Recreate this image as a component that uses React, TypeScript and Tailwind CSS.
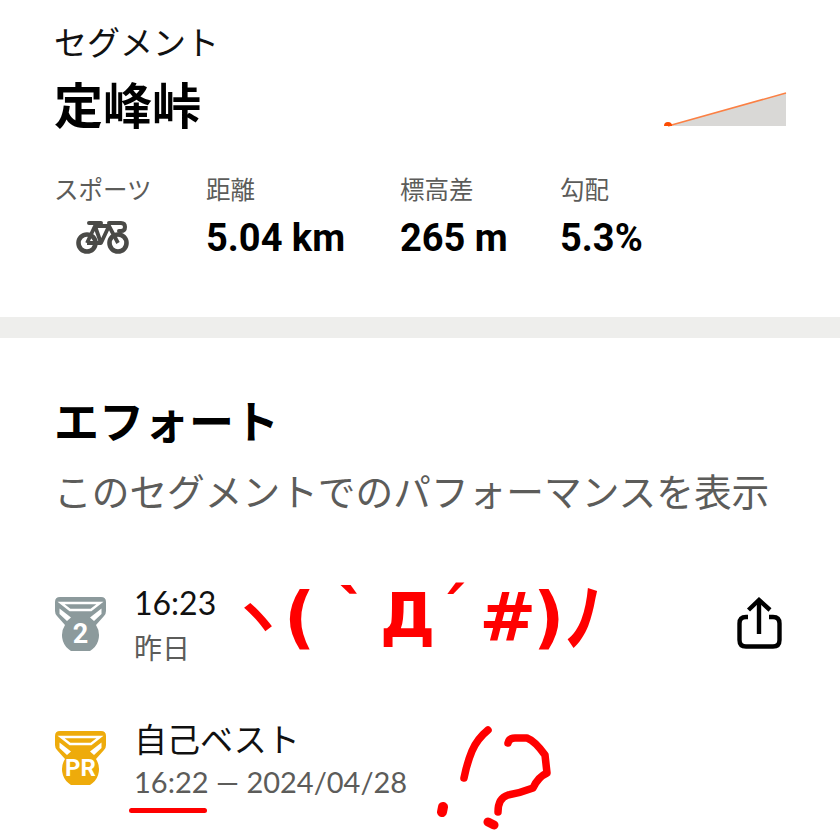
import React from 'react';

const JP = "font-['Noto_Sans_CJK_JP','Noto_Sans',sans-serif]";

function Stat({ label, value, className }: { label: string; value: string; className: string }) {
  return (
    <div className={className}>
      <div className="text-[24.5px] leading-[28px] text-[#5c5c5a]">{label}</div>
      <div className="mt-[13px] text-[38px] leading-[44px] font-bold text-black font-['Roboto',sans-serif]">{value}</div>
    </div>
  );
}

function Medal({ color, children }: { color: string; children: React.ReactNode }) {
  return (
    <svg width="51" height="54" viewBox="0 0 51 54" className="shrink-0 ml-[1px] mt-[-2px]">
      <path
        d="M5 0H46Q51 0 51 5V14Q51 17 49 19L41 28A18.5 18.5 0 1 1 10 28L2 19Q0 17 0 14V5Q0 0 5 0Z"
        fill={color}
      />
      <path d="M6 6H45L36 13H15Z" fill="none" stroke="#fff" strokeWidth="2.4" />
      <path d="M4.5 11.5V17L12 24L16 20.5ZM46.5 11.5V17L39 24L35 20.5Z" fill="#fff" />
      {children}
    </svg>
  );
}

function BikeIcon() {
  return (
    <svg width="54" height="34" viewBox="0 0 54 34" fill="none" stroke="#4a4a47" strokeWidth="4.6">
      <circle cx="11" cy="23" r="8.5" />
      <circle cx="42" cy="23" r="8.5" />
      <path d="M11 23L19 6H33L25 23H11M19 6L25 23M33 6L42 23" strokeWidth="3.8" strokeLinejoin="round" />
      <path d="M13 3H25M33 3H45Q49 3 49 7T45 11H43" strokeWidth="4" strokeLinecap="round" />
    </svg>
  );
}

function ShareIcon() {
  return (
    <svg width="45" height="52" viewBox="0 0 45 52" fill="none" stroke="#000" strokeWidth="4.4" className="shrink-0">
      <path d="M22 3V37" />
      <path d="M11.5 13L22 3L33 13" />
      <path d="M11 20H9Q2.5 20 2.5 26.5V43Q2.5 49.5 9 49.5H36Q42.5 49.5 42.5 43V26.5Q42.5 20 36 20H32" />
    </svg>
  );
}

export default function App() {
  return (
    <div className={`relative w-[840px] h-[835px] overflow-hidden bg-white ${JP}`}>
      <section className="h-[317px] px-[54px] pt-[19px]">
        <div className="text-[33px] leading-[44px] text-[#111]">セグメント</div>
        <div className="flex justify-between">
          <h1 className="mt-[5px] text-[49px] leading-[70px] font-bold text-black">定峰峠</h1>
          <svg width="122" height="40" viewBox="0 0 122 40" className="mt-[25px] overflow-visible">
            <path d="M4 38L122 5V38Z" fill="#d9d8d6" />
            <path d="M4 38L122 5" stroke="#fb8044" strokeWidth="1.5" fill="none" />
            <path d="M0 38A4 4 0 0 1 8 38Z" fill="#fc4c02" />
          </svg>
        </div>
        <div className="flex mt-[37px]">
          <div className="w-[152px]">
            <div className="text-[24.5px] leading-[28px] text-[#5c5c5a]">スポーツ</div>
            <div className="mt-[17px] ml-[22px]"><BikeIcon /></div>
          </div>
          <Stat label="距離" value="5.04 km" className="w-[194px]" />
          <Stat label="標高差" value="265 m" className="w-[160px]" />
          <Stat label="勾配" value="5.3%" className="" />
        </div>
      </section>

      <div className="h-[21px] bg-[#eeeeec]" />

      <section className="px-[54px] pt-[50px]">
        <h2 className="text-[45px] leading-[64px] font-bold text-black">エフォート</h2>
        <p className="mt-[11px] text-[37.7px] leading-[54px] text-[#5c5c5a]">このセグメントでのパフォーマンスを表示</p>

        <div className="flex items-center mt-[66px]">
          <Medal color="#8c9a9c">
            <text x="25.5" y="45.5" textAnchor="middle" fontSize="27" fontWeight="700" fill="#fff" fontFamily="Roboto">2</text>
          </Medal>
          <div className="ml-[28px]">
            <div className="text-[32px] leading-[40px] text-[#111] font-['Lato',sans-serif]">16:23</div>
            <div className="mt-[4px] text-[28px] leading-[40px] text-[#5c5c5a]">昨日</div>
          </div>
          <div className="ml-auto mr-[4px] mt-[-4px]"><ShareIcon /></div>
        </div>

        <div className="flex items-center mt-[49px]">
          <Medal color="#eeab0b">
            <text x="25.5" y="45" textAnchor="middle" fontSize="24" fontWeight="700" fill="#fff" fontFamily="Roboto">PR</text>
          </Medal>
          <div className="ml-[28px]">
            <div className="text-[33px] leading-[44px] text-[#111]">自己ベスト</div>
            <div className="mt-[2px] text-[29px] leading-[40px] text-[#5c5c5a] font-['Lato','Noto_Sans_CJK_JP',sans-serif]">16:22 — 2024/04/28</div>
          </div>
        </div>
      </section>

      {/* red scribbles drawn over the screenshot */}
      <div className="absolute left-[230px] top-[578px] flex items-start text-[62px] leading-[80px] font-bold text-[#ff0000] whitespace-pre font-['DejaVu_Sans','Noto_Sans_CJK_JP',sans-serif]">
        <span className="text-[54px]">ヽ</span>
        <span className="text-[68px]">(</span>
        <span className="ml-[6px] mt-[6px]">｀</span>
        <span className="ml-[-3px] mt-[-2px]">Д</span>
        <span className="ml-[1px] mt-[-6px]">´</span>
        <span className="ml-[12px] text-[68px]">#</span>
        <span className="ml-[-3px] text-[68px]">)</span>
        <span className="text-[76px] leading-[80px] mt-[1px]">ﾉ</span>
      </div>
      <div className="absolute left-[129px] top-[808px] w-[78px] h-[5px] rounded-full bg-[#ff0000] blur-[0.5px]" />
      <svg className="absolute left-[420px] top-[715px] blur-[0.5px]" width="150" height="120" viewBox="0 0 150 120" fill="none" stroke="#ff0000" strokeWidth="7.5" strokeLinecap="round" strokeLinejoin="round">
        <path d="M68 15Q57 24 52 36T44 63" />
        <path d="M23 92L22 97" strokeWidth="10" />
        <path d="M88 28Q89 23 95 23H107Q115 26 125 40L127 58Q118 62 113 73Q100 78 88 80Q78 83 78 97" />
        <path d="M68 107L74 110" strokeWidth="9" />
      </svg>
    </div>
  );
}
